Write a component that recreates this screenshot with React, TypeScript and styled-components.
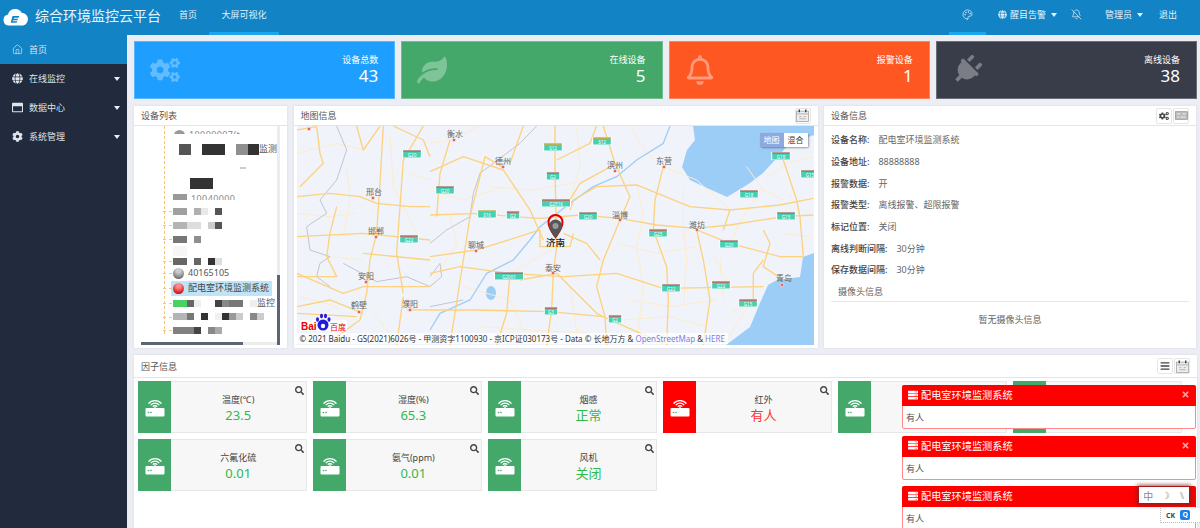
import React from "react";
import styled, {createGlobalStyle} from "styled-components";
import {FaCogs, FaLeaf, FaRegBell, FaPlug, FaSearch, FaBars, FaGlobe, FaRegWindowMaximize, FaCog, FaServer, FaTimes} from "react-icons/fa";
import {Home, Palette, BellOff} from "lucide-react";

const GlobalStyle = createGlobalStyle`
	html, body { margin: 0; padding: 0; }
	body { font-family: "Noto Sans", "Noto Sans CJK SC", sans-serif; }
	* { box-sizing: border-box; }
`;
const Page = styled.div`
	position: relative;
	width: 1200px;
	height: 528px;
	overflow: hidden;
	display: flex;
	flex-direction: column;
	background: #eceef4;
`;
// header
const Header = styled.header`
	height: 35px;
	flex: none;
	display: flex;
	align-items: stretch;
	background: #1283c4;
	color: #fff;
`;
const Logo = styled.div`
	display: flex;
	align-items: center;
	padding-left: 3px;
	width: 35px;
`;
const Brand = styled.div`
	width: 132px;
	font-size: 14px;
	line-height: 32px;
	color: #e8f4fb;
`;
const NavItem = styled.div<{$w: number; $active?: boolean; $justify?: string; $pl?: number; $pr?: number}>`
	width: ${p => p.$w}px;
	display: flex;
	align-items: center;
	justify-content: ${p => p.$justify || "center"};
	gap: 3px;
	padding: 0 ${p => p.$pr || 0}px 3px ${p => p.$pl || 0}px;
	font-size: 9px;
	color: #e3f1fa;
	border-bottom: 3px solid ${p => (p.$active ? "#1aa7ee" : "transparent")};
`;
const Spacer = styled.div`
	flex: 1;
`;
const Caret = styled.span`
	width: 0;
	height: 0;
	margin-left: 2px;
	border-left: 3.5px solid transparent;
	border-right: 3.5px solid transparent;
	border-top: 4px solid #e3f1fa;
`;
// body
const Body = styled.div`
	flex: 1;
	min-height: 0;
	display: flex;
`;
const Sidebar = styled.aside`
	width: 127px;
	flex: none;
	background: #212b3d;
`;
const MenuItem = styled.div<{$active?: boolean}>`
	height: 29px;
	display: flex;
	align-items: center;
	padding: 0 7px 0 12px;
	gap: 6px;
	font-size: 9px;
	color: #dfe3ea;
	background: ${p => (p.$active ? "#1283c4" : "transparent")};
	span:first-of-type { flex: 1; }
	svg { flex: none; width: 11px; height: 11px; }
`;
const Main = styled.main`
	flex: 1;
	min-width: 0;
	padding: 6px 3px 0 7px;
	display: flex;
	flex-direction: column;
	gap: 7px;
`;
const StatRow = styled.section`
	display: grid;
	grid-template-columns: repeat(4, 1fr);
	gap: 6px;
	height: 58px;
	flex: none;
`;
const StatCard = styled.div<{$bg: string; $icon: string}>`
	display: flex;
	align-items: center;
	justify-content: space-between;
	padding: 0 16px 0 15px;
	background: ${p => p.$bg};
	border: 1px solid rgba(255, 255, 255, 0.25);
	color: #fff;
	svg { color: ${p => p.$icon}; width: 30px; height: 30px; }
`;
const PlugIcon = styled(FaPlug)`
	transform: rotate(45deg);
`;
const StatText = styled.div`
	text-align: right;
	padding-bottom: 2px;
`;
const StatLabel = styled.div`
	font-size: 9px;
	line-height: 13px;
`;
const StatValue = styled.div`
	font-size: 17px;
	line-height: 20px;
`;
const MiddleRow = styled.section`
	display: grid;
	grid-template-columns: 153px 524px 372px;
	gap: 7px 6.5px;
	height: 242px;
	flex: none;
`;
const Panel = styled.div`
	background: #fff;
	display: flex;
	flex-direction: column;
	min-height: 0;
	min-width: 0;
	box-shadow: 0 0 2px rgba(120, 130, 150, 0.2);
`;
const PanelHead = styled.div`
	height: 20px;
	flex: none;
	display: flex;
	align-items: center;
	justify-content: space-between;
	padding: 0 7px;
	font-size: 9px;
	color: #555;
	border-bottom: 1px solid #e4e5ea;
`;
const Tools = styled.div`
	display: flex;
	gap: 1px;
`;
const ToolBtn = styled.div`
	width: 16px;
	height: 16px;
	display: flex;
	align-items: center;
	justify-content: center;
	border: 1px solid #e6e6e6;
	border-radius: 2px;
	background: #fff;
	color: #444;
	svg { width: 10px; height: 10px; }
`;
const GlyphBtn = styled(ToolBtn)`
	svg { width: 13px; height: 13px; }
`;
// device tree
const TreeBody = styled.div`
	position: relative;
	flex: 1;
	min-height: 0;
	overflow: hidden;
	padding-left: 29px;
`;
const TreeLine = styled.div`
	position: absolute;
	left: 29.5px;
	top: 0;
	height: 208px;
	border-left: 1px dashed #f6c67c;
`;
const TreeRow = styled.div<{$h: number; $selected?: boolean}>`
	position: relative;
	height: ${p => p.$h}px;
	padding-left: 10px;
	display: flex;
	align-items: center;
	font-size: 9px;
	line-height: 10px;
	color: #555;
	white-space: nowrap;
`;
// rows whose lower part is hidden by a blurred patch in the screenshot
const CutRow = styled(TreeRow)<{$top: number}>`
	align-items: flex-start;
	padding-top: ${p => p.$top}px;
	overflow: hidden;
`;
const CutLabel = styled.span`
	margin-left: 4px;
	letter-spacing: 0.4px;
	color: #888;
`;
const CutBall = styled.span`
	flex: none;
	width: 11px;
	height: 11px;
	margin-left: 1px;
	border-radius: 50%;
	background: #999;
`;
const TreeTick = styled.span`
	position: absolute;
	left: 0;
	top: 50%;
	width: 9px;
	border-top: 1px dashed #f6c67c;
`;
const Mosaic = styled.span<{$w: number; $c: string; $h?: number; $ml?: number}>`
	flex: none;
	width: ${p => p.$w}px;
	height: ${p => p.$h || 7}px;
	margin-left: ${p => p.$ml || 0}px;
	background: ${p => p.$c};
`;
const Ball = styled.span<{$c: string; $d: string}>`
	flex: none;
	width: 11px;
	height: 11px;
	margin-right: 4px;
	border-radius: 50%;
	background: radial-gradient(circle at 50% 25%, ${p => p.$c} 20%, ${p => p.$d} 85%);
`;
const Selected = styled.div`
	display: flex;
	align-items: center;
	height: 15px;
	margin-left: -2px;
	padding: 0 2px;
	width: 101px;
	background: #bfe4f8;
	color: #444;
`;
const ScrollY = styled.div`
	position: absolute;
	right: 7px;
	top: 0;
	bottom: 3px;
	width: 3px;
	background: #ececec;
	&::after {
		content: "";
		position: absolute;
		left: 0;
		right: 0;
		bottom: 0;
		height: 70px;
		background: #5b6573;
	}
`;
const ScrollX = styled.div`
	position: absolute;
	left: 7px;
	right: 10px;
	bottom: 3px;
	height: 3px;
	background: #ececec;
	&::after {
		content: "";
		position: absolute;
		left: 0;
		top: 0;
		bottom: 0;
		width: 102px;
		background: #5b6573;
	}
`;
// map
const MapWrap = styled.div`
	position: relative;
	flex: 1;
	min-height: 0;
	margin: 0 4px 3px 3px;
	overflow: hidden;
	background: #f0f3fa;
	svg { display: block; }
`;
const MapSwitch = styled.div`
	position: absolute;
	top: 7px;
	right: 6px;
	display: flex;
	font-size: 8px;
	line-height: 14px;
	border-radius: 2px;
	box-shadow: 1px 1px 2px rgba(60, 60, 90, 0.5);
`;
const SwitchBtn = styled.span<{$on?: boolean}>`
	width: 24px;
	text-align: center;
	background: ${p => (p.$on ? "#8ea8e0" : "#fff")};
	color: ${p => (p.$on ? "#fff" : "#333")};
`;
const Copyright = styled.div`
	position: absolute;
	left: 0;
	bottom: 1px;
	padding: 0 3px;
	font-size: 8px;
	line-height: 11px;
	color: #333;
	white-space: nowrap;
	background: rgba(255, 255, 255, 0.7);
	a { color: #7a7fe0; }
`;
// device info
const InfoBody = styled.div`
	flex: 1;
	padding: 3px 7px 0;
	font-size: 9px;
	color: #666;
`;
const InfoLine = styled.div`
	height: 21.7px;
	display: flex;
	align-items: center;
	gap: 9px;
	b { font-weight: 500; color: #444; }
`;
const CameraHead = styled.div`
	height: 21px;
	padding: 2px 7px 0;
	line-height: 18px;
	border-bottom: 1px solid #e8e8e8;
`;
const CameraEmpty = styled.div`
	text-align: center;
	padding-top: 11px;
	line-height: 14px;
`;
// factors
const FactorPanel = styled(Panel)`
	flex: 1;
`;
const FactorHead = styled(PanelHead)`
	height: 23px;
`;
const FactorGrid = styled.div`
	display: grid;
	grid-template-columns: repeat(6, 168.5px);
	grid-auto-rows: 52px;
	gap: 6px 6.6px;
	padding: 3px 0 0 4px;
`;
const FactorCard = styled.div`
	position: relative;
	display: flex;
	background: #f7f7f7;
	border: 1px solid #e7e7e7;
`;
const FactorIcon = styled.div<{$bg: string}>`
	width: 33px;
	flex: none;
	margin: -1px 0 -1px -1px;
	display: flex;
	align-items: center;
	justify-content: center;
	background: ${p => p.$bg};
`;
const FactorText = styled.div`
	flex: 1;
	text-align: center;
	padding-top: 12px;
`;
const FactorLabel = styled.div`
	font-size: 9px;
	line-height: 12px;
	color: #444;
`;
const FactorValue = styled.div<{$c: string}>`
	font-size: 13px;
	line-height: 18px;
	color: ${p => p.$c};
`;
const SearchMark = styled.span`
	position: absolute;
	top: 4px;
	right: 2px;
	color: #444;
	svg { display: block; width: 9px; height: 9px; }
`;
// toasts
const Toasts = styled.div`
	position: absolute;
	left: 902px;
	top: 385px;
	width: 294px;
	display: flex;
	flex-direction: column;
	gap: 6.5px;
`;
const Toast = styled.div`
	height: 44px;
	flex: none;
	background: #fff;
	border: 1px solid #ff8a8a;
	border-radius: 2px;
`;
const ToastHead = styled.div`
	height: 21px;
	margin: -1px -1px 0;
	padding: 0 6px 2px;
	display: flex;
	align-items: center;
	gap: 3px;
	background: #f00;
	border-radius: 2px 2px 0 0;
	color: #fff;
	font-size: 10.2px;
	font-family: "Liberation Serif", "Noto Sans CJK SC", serif;
	span { flex: 1; }
`;
const ToastBody = styled.div`
	padding: 5px 3px;
	font-size: 9px;
	line-height: 13px;
	color: #555;
`;
const ImeBar = styled.div`
	position: absolute;
	left: 1139px;
	top: 487px;
	width: 50px;
	height: 16px;
	display: flex;
	align-items: center;
	justify-content: space-around;
	background: #fff;
	font-size: 10px;
	color: #888;
	box-shadow: 0 0 4px 2px rgba(110, 40, 40, 0.8);
`;
const Tray = styled.div`
	position: absolute;
	left: 1160px;
	top: 508px;
	width: 40px;
	height: 15px;
	display: flex;
	align-items: center;
	gap: 5px;
	padding-left: 5px;
	background: #fff;
	border-left: 1px dotted #bbb;
	border-bottom: 1px dotted #bbb;
	font-size: 7px;
	font-weight: 700;
	color: #444;
`;
const TrayQ = styled.span`
	width: 10px;
	height: 10px;
	border-radius: 2px;
	background: #1a7fe8;
	color: #fff;
	line-height: 10px;
	text-align: center;
`;

function RouterIcon(){
	return (
		<svg width="20" height="20" viewBox="0 0 20 20" fill="none" stroke="#fff" strokeWidth="1.3">
			<path d="M3.5 6.6a8.6 8.6 0 0 1 13 0" />
			<path d="M5.7 8.2a5.6 5.6 0 0 1 8.6 0" />
			<path d="M7.8 9.7a2.8 2.8 0 0 1 4.4 0" />
			<path d="M10 9.5v2" />
			<rect x="0.5" y="11" width="19" height="8.5" rx="1" fill="#fff" stroke="none" />
			<circle cx="3.5" cy="15.5" r="0.8" fill="#45a86b" stroke="none" />
			<circle cx="6" cy="15.5" r="0.8" fill="#45a86b" stroke="none" />
		</svg>
	);
}
function PanelGlyph(){
	return (
		<svg viewBox="0 0 12 12" fill="none" stroke="#aaa" strokeWidth="0.8">
			<rect x="0.5" y="2" width="11" height="9.5" fill="#eee" />
			<path d="M3 0.5v2.5M9 0.5v2.5" stroke="#333" strokeWidth="1.2" />
			<path d="M0.5 4.5h11M3 7h2M7 7h2M3 9h6" />
		</svg>
	);
}
function KeyboardGlyph(){
	return (
		<svg viewBox="0 0 12 12" fill="none">
			<rect x="0.5" y="2.5" width="11" height="7" fill="#bbb" stroke="#888" strokeWidth="0.6" />
			<path d="M2 4.5h3M7 4.5h3M2 7.5h2M5 7.5h5" stroke="#eee" strokeWidth="0.9" />
		</svg>
	);
}
function CloudLogo(){
	return (
		<svg width="26" height="17" viewBox="0 0 26 17">
			<path d="M6 16.5a5.5 5.5 0 0 1-1-10.9A7.5 7.5 0 0 1 18.7 3.7 6.5 6.5 0 0 1 20 16.5Z" fill="#fff" />
			<path d="M9.5 7h7l-1 1.7H11l-.3 1h4.3l-.7 1.5h-4l-.3 1h4.5l-1 1.5H7.7Z" fill="#1283c4" />
		</svg>
	);
}

const primary = [
	"M0,345 L150,340 L250,350 L330,355 L450,345 L570,355 L680,375 L800,385 L900,375 L1060,350 L1150,345",
	"M375,78 L375,210 L378,340 L380,440 L370,520 L365,630 L350,735",
	"M520,78 L555,190 L600,290 L570,360 L520,480 L500,560 L525,650 L530,735",
	"M700,200 L675,300 L670,390 L710,500 L715,600 L710,735",
	"M0,215 L100,170 L220,210 L300,330 L340,420",
	"M60,120 L30,220 L20,350",
	"M215,200 L165,170 L120,350 L100,480 L60,735",
	"M280,78 L240,190",
	"M800,390 L820,480 L840,600 L820,735",
	"M1000,480 L970,520 L970,610",
	"M1060,180 L1100,300 L1110,350 L1120,470",
	"M1000,390 L1020,430 L1000,500 L1060,540",
	"M800,390 L900,430 L1050,470 L1120,470",
	"M900,330 L880,390",
	"M420,330 L430,300 L500,260 L620,255 L780,320 L900,330 L1050,315 L1150,295",
	"M240,520 L400,530 L560,520 L700,565 L1000,560",
	"M240,520 L230,640 L200,735",
	"M270,540 L380,520 L500,640 L540,660 L700,730",
	"M0,630 L130,630 L360,635 L520,650",
	"M0,470 L140,450 L330,390",
	"M400,400 L470,430 L510,480",
	"M500,78 L480,130 L380,180",
	"M560,190 L450,250 L420,300",
	"M330,390 L330,440 L420,440 L430,400",
	"M0,520 L90,500 L240,520",
];
const minor = [
	"M150,78 L60,120 L0,130",
	"M600,78 L650,160 L700,200 L800,240 L900,330",
	"M380,440 L240,520",
	"M950,200 L1000,270 L1060,300",
	"M1150,170 L1070,190 L1000,240",
	"M900,640 L960,610 L880,735",
	"M600,600 L720,620 L860,600",
	"M180,260 L300,270 L430,250",
	"M850,470 L900,560",
	"M440,78 L450,200 L420,300",
	"M620,255 L640,340 L620,440 L640,560 L620,735",
	"M760,260 L760,370 L770,480 L760,620",
	"M870,480 L880,600",
	"M0,270 L100,300 L220,260",
	"M60,350 L80,430 L0,560",
	"M100,560 L240,600 L300,735",
	"M420,560 L440,690 L420,735",
	"M560,430 L680,460 L800,440",
	"M900,430 L950,330 L1000,270",
	"M150,680 L300,690 L480,700",
	"M580,660 L720,650 L830,680",
	"M1060,400 L1140,410",
];
const west = [
	"M500,90 L560,80 L570,160 L580,190 L510,260",
	"M500,290 L600,280 L690,290 L740,310 L840,320 L900,320",
	"M680,78 L700,150 L750,78",
	"M760,78 L750,250 L740,400 L720,480 L710,580 L690,660 L600,725",
	"M500,410 L700,400 L900,420",
	"M620,320 L600,400 L590,470 L620,530 L500,530",
	"M500,520 L640,580 L700,560 L900,560",
	"M820,590 L800,735",
	"M880,78 L820,180 L810,320 L800,460 L820,580",
	"M790,78 L880,120 L900,170",
	"M500,640 L680,650",
	"M500,620 L600,600 L700,640",
	"M830,630 L900,630",
	"M700,460 L900,480",
];
const westMinor = [
	"M500,160 L620,130 L700,150",
	"M650,200 L660,300 L640,400",
	"M500,340 L600,350 L680,340",
	"M780,100 L790,260 L860,400",
	"M840,220 L900,240",
	"M600,470 L700,480",
	"M510,590 L620,620",
	"M730,640 L780,700",
];
const cities = [
	{n: "衡水", x: 454, y: 140, lx: 455, ly: 137},
	{n: "德州", x: 503, y: 167, lx: 503, ly: 164},
	{n: "滨州", x: 615, y: 171, lx: 615, ly: 168},
	{n: "东营", x: 664, y: 167, lx: 664, ly: 164},
	{n: "聊城", x: 476, y: 251, lx: 476, ly: 248},
	{n: "淄博", x: 620, y: 220, lx: 620, ly: 218},
	{n: "潍坊", x: 697, y: 230, lx: 697, ly: 228},
	{n: "泰安", x: 553, y: 273, lx: 553, ly: 271},
	{n: "青岛", x: 782, y: 285, lx: 784, ly: 281},
	{n: "邢台", x: 373, y: 198, lx: 374, ly: 195},
	{n: "邯郸", x: 376, y: 237, lx: 376, ly: 234},
	{n: "安阳", x: 366, y: 282, lx: 366, ly: 279},
	{n: "鹤壁", x: 359, y: 312, lx: 359, ly: 308},
	{n: "濮阳", x: 410, y: 310, lx: 410, ly: 307},
	{n: "", x: 309, y: 129, lx: 0, ly: 0},
];
const shields = [
	{t: "S12", x: 553, y: 147, c: "#e0a82e"},
	{t: "S12", x: 602, y: 141, c: "#e0a82e"},
	{t: "G18", x: 781, y: 156, c: "#d9534f"},
	{t: "G18", x: 749, y: 194, c: "#d9534f"},
	{t: "G2", x: 553, y: 176, c: "#d9534f"},
	{t: "G20", x: 445, y: 190, c: "#d9534f"},
	{t: "G2516", x: 556, y: 203, c: "#d9534f"},
	{t: "S16", x: 487, y: 214, c: "#e0a82e"},
	{t: "G2", x: 513, y: 215, c: "#d9534f"},
	{t: "G20", x: 588, y: 216, c: "#d9534f"},
	{t: "G25", x: 658, y: 233, c: "#d9534f"},
	{t: "G20", x: 729, y: 244, c: "#d9534f"},
	{t: "G15", x: 786, y: 216, c: "#d9534f"},
	{t: "G15", x: 810, y: 174, c: "#d9534f"},
	{t: "G2001", x: 509, y: 276, c: "#d9534f"},
	{t: "G22", x: 671, y: 288, c: "#d9534f"},
	{t: "G22", x: 721, y: 285, c: "#d9534f"},
	{t: "G15", x: 748, y: 303, c: "#d9534f"},
	{t: "G3", x: 551, y: 311, c: "#d9534f"},
	{t: "G2", x: 615, y: 319, c: "#d9534f"},
	{t: "G20", x: 412, y: 154, c: "#d9534f"},
	{t: "G22", x: 409, y: 239, c: "#d9534f"},
];

function ChinaMap(){
	return (
		<svg width="517" height="219" viewBox="297 126 517 219">
			<rect x="297" y="126" width="517" height="219" fill="#f0f3fa" />
			<g fill="#9ccdf7">
				<path d="M693,126 L695,140 L687,150 L682,167 L690,180 L707,188 L727,197 L742,188 L750,183 L763,173 L775,160 L790,143 L814,135 L814,126 Z" />
				<path d="M726,345 L750,327 L760,303 L768,285 L777,280 L800,277 L803,257 L814,253 L814,345 Z" />
				<ellipse cx="491" cy="293" rx="5" ry="7" />
			</g>
			<g transform="translate(430,100) scale(0.3333)" fill="none" strokeLinejoin="round">
				<g stroke="#fdeccb" strokeWidth="3">
					{minor.map(d => <path key={d} d={d} />)}
				</g>
				<path d="M320,78 L270,130 L150,220 L130,280 L120,350 L50,390 L0,430 M0,530 L30,490 L35,530 L0,560 M0,620 L100,600" stroke="#b6bcc8" strokeWidth="2.5" />
				<path d="M720,78 L700,130 L620,180 L560,230 L490,260 L420,310 L330,380 L300,420 L250,480 L170,520 L120,600 L30,640 L0,690" stroke="#a0cdf5" strokeWidth="4" />
				<g stroke="#fdd27f" strokeWidth="4">
					{primary.map(d => <path key={d} d={d} />)}
				</g>
			</g>
			<g transform="translate(130,100) scale(0.3333)" fill="none" strokeLinejoin="round">
				<g stroke="#fdeccb" strokeWidth="3">
					{westMinor.map(d => <path key={d} d={d} />)}
				</g>
				<path d="M620,78 L650,150 L620,240 L570,300 L590,340 L530,380 L540,450 L600,470 L570,490 L560,530 L600,560 M640,490 L740,545 L830,530 L900,560" stroke="#b6bcc8" strokeWidth="2.5" />
				<g stroke="#fdd27f" strokeWidth="4">
					{west.map(d => <path key={d} d={d} />)}
				</g>
			</g>
			{shields.map(s => (
				<g key={s.t + s.x}>
					<rect x={s.x - s.t.length * 2.6 - 2} y={s.y - 4} width={s.t.length * 5.2 + 4} height="8" fill="#fff" />
					<rect x={s.x - s.t.length * 2.6 - 1} y={s.y - 3.5} width={s.t.length * 5.2 + 2} height="7" fill="#46cfb2" />
					<rect x={s.x - s.t.length * 2.6 - 1} y={s.y - 3.5} width={s.t.length * 5.2 + 2} height="1.2" fill={s.c} />
					<text x={s.x} y={s.y + 3} fontSize="4.5" textAnchor="middle" fill="#fff">{s.t}</text>
				</g>
			))}
			{cities.map(c => (
				<g key={c.x}>
					<circle cx={c.x} cy={c.y} r="1.8" fill="#e8625f" stroke="#fff" strokeWidth="0.5" />
					{c.n && <text x={c.lx} y={c.ly} fontSize="8" textAnchor="middle" fill="#666">{c.n}</text>}
				</g>
			))}
			<path d="M556,240 C552,234 549,231 549,225 A7,7 0 0 1 563,225 C563,231 560,234 556,240Z" fill="none" stroke="#d00" strokeWidth="2" transform="translate(-0.5,-3)" />
			<path d="M555.5,238 C551,232 549,229 549,226 A6.5,6.5 0 0 1 562,226 C562,229 560,232 555.5,238Z" fill="#555" />
			<circle cx="555.5" cy="226" r="3" fill="#999" />
			<text x="555.5" y="246" fontSize="9.5" fontWeight="500" textAnchor="middle" fill="#222">济南</text>
			<rect x="300" y="320" width="47" height="11" rx="1.5" fill="#fff" opacity="0.85" />
			<text x="301" y="330" fontSize="10" fontWeight="700" fill="#e00" fontFamily="Liberation Sans">Bai</text>
			<g fill="#2319dc">
				<circle cx="323" cy="325" r="5.5" />
				<ellipse cx="317.5" cy="319.5" rx="1.5" ry="2.2" />
				<ellipse cx="321.5" cy="316" rx="1.5" ry="2.2" />
				<ellipse cx="325.5" cy="316" rx="1.5" ry="2.2" />
				<ellipse cx="329" cy="319.5" rx="1.5" ry="2.2" />
			</g>
			<circle cx="323" cy="326" r="2.2" fill="#fff" />
			<text x="330" y="330" fontSize="8" fill="#e00">百度</text>
		</svg>
	);
}

const infos = [
	["设备名称:", "配电室环境监测系统"],
	["设备地址:", "88888888"],
	["报警数据:", "开"],
	["报警类型:", "离线报警、超限报警"],
	["标记位置:", "关闭"],
	["离线判断间隔:", "30分钟"],
	["保存数据间隔:", "30分钟"],
];
interface IFactor{
	name: string;
	value: string;
	alarm?: boolean;
}
const factors: IFactor[] = [
	{name: "温度(℃)", value: "23.5"},
	{name: "湿度(%)", value: "65.3"},
	{name: "烟感", value: "正常"},
	{name: "红外", value: "有人", alarm: true},
	{name: "", value: ""},
	{name: "", value: ""},
	{name: "六氟化硫", value: "0.01"},
	{name: "氨气(ppm)", value: "0.01"},
	{name: "风机", value: "关闭"},
];

function DeviceTree(){
	return (
		<TreeBody>
			<TreeLine />
			<CutRow $h={8} $top={4}><CutBall /><CutLabel>10000007(t</CutLabel></CutRow>
			<TreeRow $h={30}><Mosaic $w={12} $c="#555" $h={11} $ml={6} /><Mosaic $w={23} $c="#333" $h={11} $ml={11} /><Mosaic $w={12} $c="#8f8f8f" $h={11} $ml={11} /><Mosaic $w={11} $c="#333" $h={11} /><span>监测</span></TreeRow>
			<TreeRow $h={8}><Mosaic $w={6} $c="#ccc" $h={2} $ml={67} /></TreeRow>
			<TreeRow $h={22}><Mosaic $w={23} $c="#333" $h={11} $ml={17} /></TreeRow>
			<CutRow $h={6} $top={0}><Mosaic $w={14} $c="#999" $h={8} /><CutLabel>10040000</CutLabel></CutRow>
			<TreeRow $h={4} />
			<TreeRow $h={14}><TreeTick /><Mosaic $w={14} $c="#a0a0a0" /><Mosaic $w={7} $c="#b0b0b0" $ml={7} /><Mosaic $w={7} $c="#e8e8e8" /><Mosaic $w={7} $c="#555" $ml={7} /></TreeRow>
			<TreeRow $h={14}><TreeTick /><Mosaic $w={14} $c="#b4b4b4" /><Mosaic $w={7} $c="#ddd" /><Mosaic $w={7} $c="#ddd" /><Mosaic $w={7} $c="#ccc" $ml={7} /><Mosaic $w={7} $c="#555" /></TreeRow>
			<TreeRow $h={14}><TreeTick /><Mosaic $w={14} $c="#777" /><Mosaic $w={7} $c="#8f8f8f" $ml={7} /></TreeRow>
			<TreeRow $h={10}><Mosaic $w={14} $c="#f6f6f6" $h={10} /></TreeRow>
			<TreeRow $h={10}><TreeTick /><Mosaic $w={14} $c="#666" /><Mosaic $w={7} $c="#666" $ml={7} /><Mosaic $w={7} $c="#333" $ml={7} /><Mosaic $w={7} $c="#ddd" /></TreeRow>
			<TreeRow $h={14}><TreeTick /><Ball $c="#ccc" $d="#666" /><span>40165105</span></TreeRow>
			<TreeRow $h={16}><TreeTick /><Selected><Ball $c="#ff8a8a" $d="#c00" />配电室环境监测系统</Selected></TreeRow>
			<TreeRow $h={14}><TreeTick /><Mosaic $w={14} $c="#4bd163" /><Mosaic $w={7} $c="#666" /><Mosaic $w={7} $c="#eee" /><Mosaic $w={7} $c="#444" $ml={14} /><Mosaic $w={7} $c="#888" /><Mosaic $w={14} $c="#777" /><Mosaic $w={7} $c="#eee" $ml={7} /><span>监控</span></TreeRow>
			<TreeRow $h={13}><TreeTick /><Mosaic $w={14} $c="#b4b4b4" /><Mosaic $w={7} $c="#777" /><Mosaic $w={7} $c="#333" $ml={7} /><Mosaic $w={7} $c="#f0f0f0" $ml={7} /><Mosaic $w={7} $c="#333" /><Mosaic $w={7} $c="#999" /><Mosaic $w={7} $c="#ccc" /><Mosaic $w={7} $c="#888" $ml={7} /><Mosaic $w={7} $c="#ccc" /></TreeRow>
			<TreeRow $h={14}><TreeTick /><Mosaic $w={21} $c="#808080" /><Mosaic $w={7} $c="#444" /><Mosaic $w={7} $c="#888" $ml={7} /><Mosaic $w={7} $c="#aaa" /></TreeRow>
			<ScrollY />
			<ScrollX />
		</TreeBody>
	);
}

function App(){
	return (
		<Page>
			<GlobalStyle />
			<Header>
				<Logo><CloudLogo /></Logo>
				<Brand>综合环境监控云平台</Brand>
				<NavItem $w={42}>首页</NavItem>
				<NavItem $w={70} $active>大屏可视化</NavItem>
				<Spacer />
				<NavItem $w={37} $active><Palette size={11} strokeWidth={1.6} /></NavItem>
				<NavItem $w={80} $justify="flex-start" $pl={12}><FaGlobe size={9} />醒目告警<Caret /></NavItem>
				<NavItem $w={20}><BellOff size={11} strokeWidth={1.6} /></NavItem>
				<NavItem $w={58} $justify="flex-end" $pr={1}>管理员<Caret /></NavItem>
				<NavItem $w={56} $justify="flex-start" $pl={15}>退出</NavItem>
			</Header>
			<Body>
				<Sidebar>
					<MenuItem $active><Home strokeWidth={1.5} /><span>首页</span></MenuItem>
					<MenuItem><FaGlobe /><span>在线监控</span><Caret /></MenuItem>
					<MenuItem><FaRegWindowMaximize /><span>数据中心</span><Caret /></MenuItem>
					<MenuItem><FaCog /><span>系统管理</span><Caret /></MenuItem>
				</Sidebar>
				<Main>
					<StatRow>
						<StatCard $bg="#1e9fff" $icon="#62bcff">
							<FaCogs />
							<StatText><StatLabel>设备总数</StatLabel><StatValue>43</StatValue></StatText>
						</StatCard>
						<StatCard $bg="#45a86b" $icon="#7dc498">
							<FaLeaf />
							<StatText><StatLabel>在线设备</StatLabel><StatValue>5</StatValue></StatText>
						</StatCard>
						<StatCard $bg="#ff5722" $icon="#ff9a7a">
							<FaRegBell />
							<StatText><StatLabel>报警设备</StatLabel><StatValue>1</StatValue></StatText>
						</StatCard>
						<StatCard $bg="#393d49" $icon="#7a7d86">
							<PlugIcon />
							<StatText><StatLabel>离线设备</StatLabel><StatValue>38</StatValue></StatText>
						</StatCard>
					</StatRow>
					<MiddleRow>
						<Panel>
							<PanelHead>设备列表</PanelHead>
							<DeviceTree />
						</Panel>
						<Panel>
							<PanelHead>地图信息<Tools><GlyphBtn><PanelGlyph /></GlyphBtn></Tools></PanelHead>
							<MapWrap>
								<ChinaMap />
								<MapSwitch><SwitchBtn $on>地图</SwitchBtn><SwitchBtn>混合</SwitchBtn></MapSwitch>
								<Copyright>© 2021 Baidu - GS(2021)6026号 - 甲测资字1100930 - 京ICP证030173号 - Data © 长地万方 &amp; <a>OpenStreetMap</a> &amp; <a>HERE</a></Copyright>
							</MapWrap>
						</Panel>
						<Panel>
							<PanelHead>设备信息<Tools><ToolBtn><FaCogs /></ToolBtn><GlyphBtn><KeyboardGlyph /></GlyphBtn></Tools></PanelHead>
							<InfoBody>
								{infos.map(([k, v]) => (
									<InfoLine key={k}><b>{k}</b><span>{v}</span></InfoLine>
								))}
								<CameraHead>摄像头信息</CameraHead>
								<CameraEmpty>暂无摄像头信息</CameraEmpty>
							</InfoBody>
						</Panel>
					</MiddleRow>
					<FactorPanel>
						<FactorHead>因子信息<Tools><ToolBtn><FaBars /></ToolBtn><GlyphBtn><PanelGlyph /></GlyphBtn></Tools></FactorHead>
						<FactorGrid>
							{factors.map((f, i) => (
								<FactorCard key={i}>
									<FactorIcon $bg={f.alarm ? "#f00" : "#45a86b"}><RouterIcon /></FactorIcon>
									<FactorText>
										<FactorLabel>{f.name}</FactorLabel>
										<FactorValue $c={f.alarm ? "#f33" : "#2fb94f"}>{f.value}</FactorValue>
									</FactorText>
									{f.name && <SearchMark><FaSearch /></SearchMark>}
								</FactorCard>
							))}
						</FactorGrid>
					</FactorPanel>
				</Main>
			</Body>
			<Toasts>
				{[0, 1, 2].map(i => (
					<Toast key={i}>
						<ToastHead><FaServer size={10} /><span>配电室环境监测系统</span>{i < 2 && <FaTimes size={9} color="#ff9a9a" />}</ToastHead>
						<ToastBody>有人</ToastBody>
					</Toast>
				))}
			</Toasts>
			<ImeBar><span>中</span><span>☽</span><span>⑊</span></ImeBar>
			<Tray>CK<TrayQ>Q</TrayQ></Tray>
		</Page>
	);
}
export default App;
